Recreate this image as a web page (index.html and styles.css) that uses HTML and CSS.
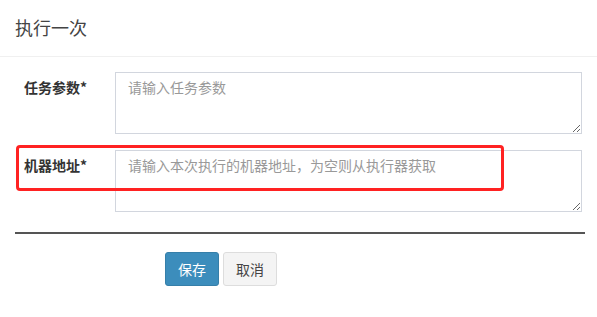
FILE: index.html
```html
<!DOCTYPE html>
<html lang="zh">
<head>
<meta charset="utf-8">
<title>执行一次</title>
<link rel="stylesheet" href="styles.css">
</head>
<body>
<div class="modal">
  <div class="modal-header">
    <h4 class="modal-title">执行一次</h4>
  </div>
  <div class="modal-body">
    <form class="form">
      <div class="form-group">
        <label class="label">任务参数<span class="star">*</span></label>
        <textarea class="textarea" placeholder="请输入任务参数"></textarea>
      </div>
      <div class="form-group">
        <label class="label">机器地址<span class="star">*</span></label>
        <textarea class="textarea" placeholder="请输入本次执行的机器地址，为空则从执行器获取"></textarea>
      </div>
      <hr class="divider">
      <div class="actions">
        <button type="button" class="btn btn-primary">保存</button>
        <button type="button" class="btn btn-default">取消</button>
      </div>
    </form>
    <div class="highlight"></div>
  </div>
</div>
</body>
</html>
```

FILE: styles.css
```css
* { box-sizing: border-box; }
html, body {
  margin: 0;
  padding: 0;
  background: #fff;
  font-family: "Noto Sans CJK SC", "Liberation Sans", sans-serif;
  font-size: 14px;
  color: #333;
}
.modal {
  width: 597px;
}
.modal-header {
  padding: 14px 15px 16px;
  height: 57px;
  border-bottom: 1px solid #f0f0f0;
}
.modal-title {
  margin: 0;
  font-size: 18px;
  line-height: 26px;
  font-weight: normal;
  color: #444;
}
.modal-body {
  position: relative;
  padding: 15px;
}
.form-group {
  display: flex;
  margin-bottom: 16px;
}
.label {
  width: 100px;
  flex: none;
  padding: 5px 0 0 9px;
  line-height: 20px;
  font-weight: bold;
  color: #333;
}
.star { font-weight: bold; }
.textarea {
  width: 470px;
  height: 62px;
  border: 1px solid #d2d6de;
  border-radius: 0;
  padding: 4px 12px 6px;
  font-family: inherit;
  font-size: 14px;
  line-height: 20px;
  color: #555;
  margin: 0;
  resize: vertical;
}
.textarea::placeholder { color: #999; }
.divider {
  margin: 20px 0 18px 0;
  width: 570px;
  border: 0;
  border-top: 2px solid #555;
}
.actions {
  display: flex;
  gap: 4px;
  padding-left: 150px;
}
.btn {
  height: 34px;
  padding: 6px 12px;
  font-family: inherit;
  font-size: 14px;
  line-height: 20px;
  border-radius: 3px;
  border: 1px solid transparent;
}
.btn-primary {
  background: #3c8dbc;
  border-color: #367fa9;
  color: #fff;
}
.btn-default {
  background: #f4f4f4;
  border-color: #ddd;
  color: #444;
}
.highlight {
  position: absolute;
  left: 16px;
  top: 88px;
  width: 488px;
  height: 46px;
  border: 3px solid #ff2222;
  border-radius: 4px;
  pointer-events: none;
}
```
